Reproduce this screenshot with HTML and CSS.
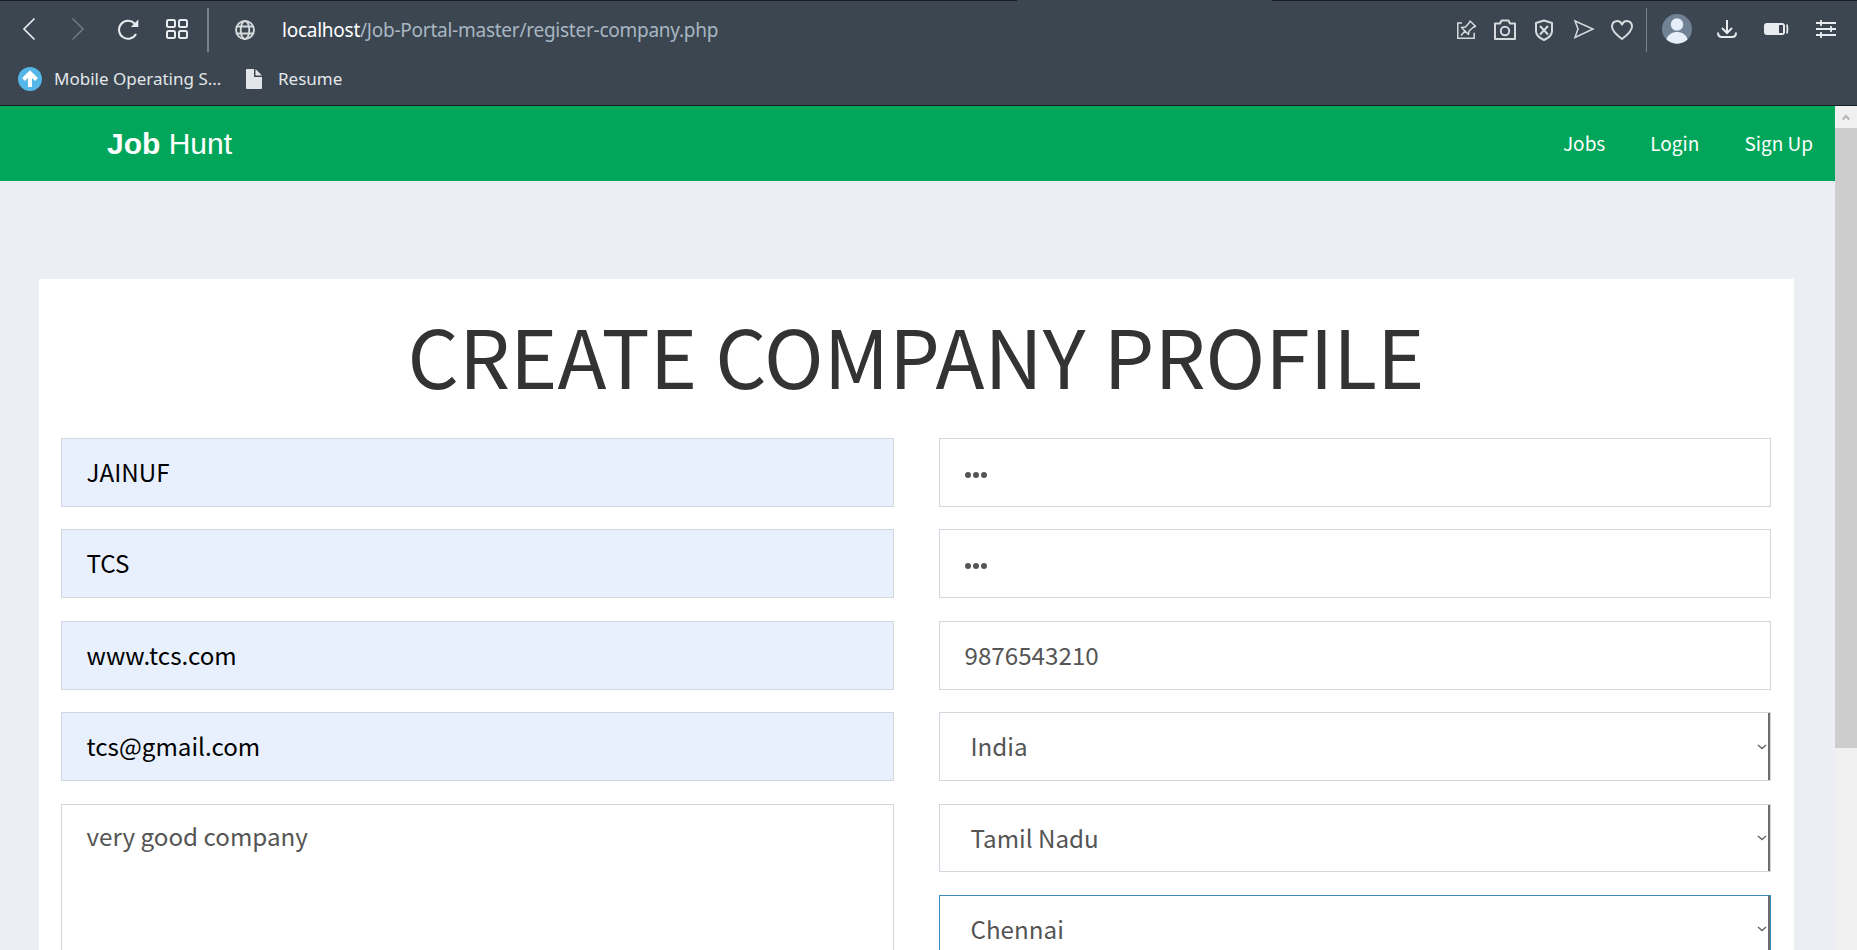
FILE: index.html
```html
<!DOCTYPE html>
<html lang="en">
<head>
<meta charset="utf-8">
<title>Job Hunt</title>
<link rel="stylesheet" href="styles.css">
</head>
<body>
<div class="window">
  <header class="browser">
    <div class="tab-edge"><span></span><span></span></div>
    <div class="toolbar">
      <svg class="chrome-icons" width="270" height="52" viewBox="0 0 270 52" fill="none" stroke="#e8ecef" stroke-width="2">
        <path d="M34.500 18.500 24 29 34.500 39.500" stroke-width="1.700"/>
        <path d="M72.500 18.500 83 29 72.500 39.500" stroke="#6d7780" stroke-width="1.700"/>
        <path d="M136 34A9 9 0 1 1 134.500 23.500" />
        <path d="M138.300 19.500v7.500h-7.500z" fill="#e8ecef" stroke="none"/>
        <rect x="167" y="20" width="8" height="7" rx="1.500"/><rect x="179" y="20" width="8" height="7" rx="1.500"/>
        <rect x="167" y="31" width="8" height="7" rx="1.500"/><rect x="179" y="31" width="8" height="7" rx="1.500"/>
        <path d="M208 8v44" stroke="#77828c"/>
        <g stroke="#d5dadd" stroke-width="1.900"><circle cx="245" cy="30" r="9"/><ellipse cx="245" cy="30" rx="4.300" ry="9"/><path d="M237 26.500h16M237 33.500h16"/></g>
      </svg>
      <div class="address"><span class="host">localhost</span><span>/Job-Portal-master/register-company.php</span></div>
      <svg class="chrome-icons" width="407" height="52" viewBox="1450 0 407 52" fill="none" stroke="#d5dadd" stroke-width="1.700">
        <path d="M1462 23h-4.200v15.200h16.400v-5.500" stroke-width="1.500"/>
        <path d="M1470 21 1475.500 26.300 1473 27.500 1469 31 1468.500 34.500 1461.500 27.500 1465.500 27 1469 23zM1465 31 1461 35.500" stroke-width="1.500" stroke-linejoin="round"/>
        <path d="M1495 23.500h5l1.500-3h7l1.500 3h5v15.500h-20z" stroke-width="2" stroke-linejoin="round"/><circle cx="1505" cy="31" r="4.200" stroke-width="2"/>
        <path d="M1544 20.500 1552 23v8c0 4-3.500 7-8 9-4.500-2-8-5-8-9v-8z" stroke-width="2" stroke-linejoin="round"/><path d="m1540 26 8 8.500m0-8.500-8 8.500" stroke-width="2"/>
        <path d="M1575 21 1593 29 1575 37.500 1578 29z" stroke-width="1.500"/>
        <path d="M1622 39C1616 34.500 1612 30.500 1612 26.500c0-6 7.500-7.500 10-2 2.500-5.500 10-4 10 2 0 4-4 8-10 12.500z" stroke-width="2" stroke-linejoin="round"/>
        <path d="M1646.500 8v44" stroke="#77828c" stroke-width="1"/>
        <circle cx="1677" cy="29" r="15" fill="#708294" stroke="none"/>
        <circle cx="1677" cy="24.500" r="6.200" fill="#e6eef8" stroke="none"/>
        <path d="M1666.500 39.500c2-10 19-10 21 0-5.500 5.500-15.500 5.500-21 0z" fill="#e6eef8" stroke="none"/>
        <g stroke="#e8ecef" stroke-width="2"><path d="M1727 20v12.500M1722 28l5 5 5-5M1718 32.500c0 3 1 4.500 4 4.500h10c3 0 4-1.500 4-4.500"/></g>
        <rect x="1764" y="23" width="21" height="12" rx="3" fill="#e8ecef" stroke="none"/><rect x="1779" y="25" width="4" height="8" fill="#3b4651" stroke="none"/><path d="M1787 24.500q1 4.500 0 9" stroke="#e8ecef"/>
        <path d="M1816 23h20M1816 29h20M1816 35h20M1821 20v6M1831 26v6M1821 32v6" stroke="#e8ecef" stroke-width="1.800"/>
      </svg>
    </div>
    <div class="bookmarks">
      <svg width="24" height="24" viewBox="0 0 24 24"><circle cx="12" cy="12" r="12" fill="#55b7e8"/><path d="M12 20V6M5.500 12.500 12 6 18.500 12.500" fill="none" stroke="#fff" stroke-width="4"/></svg>
      <span class="mark first">Mobile Operating S...</span>
      <svg class="page-icon" width="16" height="20" viewBox="0 0 16 20" fill="#e3e6e9"><path d="M1 0h7v8h8v11q0 1-1 1H1q-1 0-1-1V1q0-1 1-1zM9.500 0 16 6.500H9.500z"/></svg>
      <span class="mark second">Resume</span>
    </div>
  </header>
  <div class="viewport">
    <main class="page">
      <nav class="navbar">
        <div class="brand"><b>Job</b> Hunt</div>
        <div class="links"><a>Jobs</a><a>Login</a><a>Sign Up</a></div>
      </nav>
      <section class="card">
        <h1>CREATE COMPANY PROFILE</h1>
        <form class="form">
          <div class="column">
            <div class="field filled">JAINUF</div>
            <div class="field filled">TCS</div>
            <div class="field filled">www.tcs.com</div>
            <div class="field filled">tcs@gmail.com</div>
            <div class="field area">very good company</div>
          </div>
          <div class="column">
            <div class="field password"><i></i><i></i><i></i></div>
            <div class="field password"><i></i><i></i><i></i></div>
            <div class="field">9876543210</div>
            <div class="field select"><span>India</span><svg width="10" height="6" viewBox="0 0 10 6"><path d="M1 1 5 4.500 9 1" fill="none" stroke="#666" stroke-width="1.500"/></svg></div>
            <div class="field select"><span>Tamil Nadu</span><svg width="10" height="6" viewBox="0 0 10 6"><path d="M1 1 5 4.500 9 1" fill="none" stroke="#666" stroke-width="1.500"/></svg></div>
            <div class="field select focus"><span>Chennai</span><svg width="10" height="6" viewBox="0 0 10 6"><path d="M1 1 5 4.500 9 1" fill="none" stroke="#666" stroke-width="1.500"/></svg></div>
          </div>
        </form>
      </section>
    </main>
    <aside class="scrollbar">
      <div class="arrow"><svg width="8" height="7" viewBox="0 0 8 7"><path d="M.7 5.500 4 2 7.300 5.500" fill="none" stroke="#b5b5b5" stroke-width="2"/></svg></div>
      <div class="thumb"></div>
    </aside>
  </div>
</div>
</body>
</html>
```
FILE: styles.css
```css
* { box-sizing: border-box; }
body { margin: 0; overflow: hidden; }
.window { width: 1857px; height: 950px; overflow: hidden; display: flex; flex-direction: column; font-family: "Noto Sans CJK SC", sans-serif; }
.browser { height: 106px; flex: none; background: #3b4651; border-bottom: 1px solid #171b22; font-family: "Noto Sans", sans-serif; }
.tab-edge { height: 1px; display: flex; justify-content: space-between; }
.tab-edge span { background: #171b22; width: 1017px; }
.tab-edge span + span { width: 585px; }
.toolbar { height: 52px; margin-top: -1px; display: flex; }
.chrome-icons { flex: none; }
.address { flex: 1; padding-left: 12px; line-height: 60px; font-size: 19px; letter-spacing: -0.25px; color: #a9b6c1; white-space: nowrap; }
.host { color: #fff; }
.bookmarks { height: 54px; display: flex; align-items: center; padding-left: 18px; color: #e3e6e9; font-size: 17px; }
.mark { white-space: nowrap; line-height: 24px; padding-bottom: 1px; }
.first { margin-left: 12px; width: 180px; }
.page-icon { margin-left: 12px; }
.second { margin-left: 16px; }
.viewport { flex: 1; min-height: 0; display: flex; }
.page { width: 1835px; background: #ebeef3; overflow: hidden; }
.navbar { height: 75px; background: #02a65a; color: #fff; display: flex; justify-content: space-between; padding: 0 22px 0 107px; }
.brand { font: 30px/75px "Liberation Sans", sans-serif; }
.links { display: flex; gap: 45px; font-size: 19px; line-height: 73px; }
.card { margin: 98px 0 0 39px; width: 1755px; height: 800px; background: #fff; padding: 0 23px 0 22px; }
h1 { margin: 0; height: 159px; line-height: 150px; text-align: center; font-weight: 400; font-size: 80.5px; color: #333; white-space: nowrap; }
.form { display: grid; grid-template-columns: 833px 832px; column-gap: 45px; }
.column { display: flex; flex-direction: column; gap: 22.5px; }
.field { height: 68.9px; flex: none; border: 1px solid #d2d6de; padding: 0 24.5px; color: #555; background: #fff; font-size: 24.2px; line-height: 65px; white-space: nowrap; }
.filled { background: #e8f0fe; color: #000; }
.area { height: 200px; line-height: 61px; }
.password { display: flex; align-items: center; gap: 2.2px; padding-top: 5px; }
.password i { width: 6.2px; height: 6.2px; border-radius: 50%; background: #555; }
.select { padding: 0 3px 0 30.5px; display: flex; justify-content: space-between; align-items: center; box-shadow: inset -2px 0 #6d6d6d; }
.select span { padding-bottom: 2px; }
.focus { border-color: #3c8dbc; }
.scrollbar { width: 22px; background: #f0f0f0; }
.arrow { height: 22px; display: flex; align-items: center; justify-content: center; }
.thumb { height: 620px; background: #cdcdcd; }
```
